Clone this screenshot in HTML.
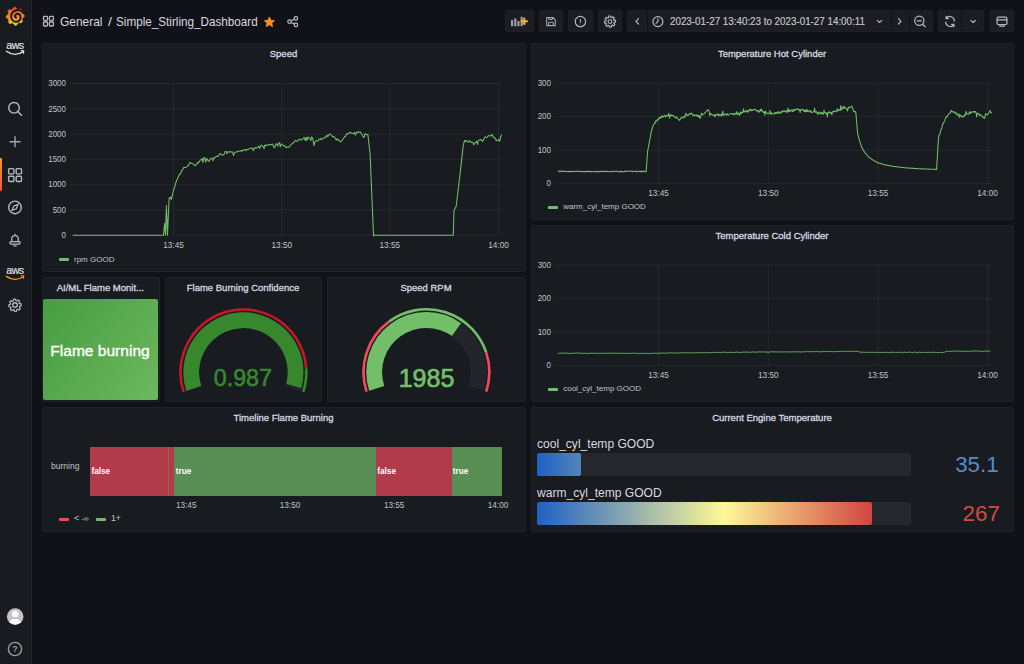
<!DOCTYPE html><html><head><meta charset="utf-8"><style>
*{margin:0;padding:0;box-sizing:border-box}
html,body{width:1024px;height:664px;overflow:hidden;background:#111217;font-family:"Liberation Sans",sans-serif}
.t{position:absolute;white-space:nowrap}
.a{position:absolute}
.panel{position:absolute;background:#181b1f;border:1px solid #1f2226;border-radius:2px}
.btn{position:absolute;background:#1b1d22;border:1px solid #1e2025;border-radius:2px}
svg{position:absolute;overflow:visible}
</style></head><body>
<div class="a" style="left:0;top:0;width:32px;height:664px;background:#181b1f;border-right:1px solid #222429"></div>
<div class="a" style="left:0;top:158.3px;width:1.6px;height:32.8px;border-radius:0 1px 1px 0;background:linear-gradient(#fa9a1c,#f05a28)"></div>
<svg style="left:0;top:0" width="32" height="32"><defs><linearGradient id="gl" x1="0" y1="0" x2="0" y2="1"><stop offset="0" stop-color="#f05028"/><stop offset="0.5" stop-color="#f4862a"/><stop offset="1" stop-color="#fcd20a"/></linearGradient></defs>
<polygon points="14.12,7.36 15.30,7.30 16.34,8.28 17.14,9.37 18.03,9.68 19.33,9.33 20.76,9.22 21.63,10.01 21.68,11.44 21.47,12.77 21.88,13.62 23.05,14.29 24.14,15.22 24.20,16.40 23.22,17.44 22.13,18.24 21.82,19.13 22.17,20.43 22.28,21.86 21.49,22.73 20.06,22.78 18.73,22.57 17.88,22.98 17.21,24.15 16.28,25.24 15.10,25.30 14.06,24.32 13.26,23.23 12.37,22.92 11.07,23.27 9.64,23.38 8.77,22.59 8.72,21.16 8.93,19.83 8.52,18.98 7.35,18.31 6.26,17.38 6.20,16.20 7.18,15.16 8.27,14.36 8.58,13.47 8.23,12.17 8.12,10.74 8.91,9.87 10.34,9.82 11.67,10.03 12.52,9.62 13.19,8.45" fill="url(#gl)" stroke="url(#gl)" stroke-width="0.8" stroke-linejoin="round"/>
<path d="M23.0 12.2 C22.50 11.90 21.15 10.72 20.0 10.4 C18.85 10.08 17.32 10.00 16.1 10.3 C14.88 10.60 13.52 11.18 12.7 12.2 C11.88 13.22 11.22 15.05 11.2 16.4 C11.18 17.75 11.83 19.40 12.6 20.3 C13.37 21.20 14.72 21.72 15.8 21.8 C16.88 21.88 18.30 21.50 19.1 20.8 C19.90 20.10 20.48 18.60 20.6 17.6 C20.72 16.60 20.30 15.43 19.8 14.8 C19.30 14.17 18.30 13.80 17.6 13.8 C16.90 13.80 16.03 14.35 15.6 14.8 C15.17 15.25 14.93 16.02 15.0 16.5 C15.07 16.98 15.83 17.50 16.0 17.7" fill="none" stroke="#181b1f" stroke-width="2.0" stroke-linecap="round"/>
</svg>
<div class="t" style="left:-285px;width:600px;text-align:center;top:39.23px;font-size:10.6px;line-height:13px;color:#e4e4e4;font-weight:normal;letter-spacing:-0.5px;-webkit-text-stroke:0.15px #e4e4e4;">aws</div>
<svg style="left:0;top:0" width="32" height="300"><path d="M6.4 51.3 Q14.7 57.2 23.2 51.6" fill="none" stroke="#e6e6e6" stroke-width="1.3" stroke-linecap="round"/><path d="M21.3 50.6 L23.7 50.8 L23.5 53.2" fill="none" stroke="#e6e6e6" stroke-width="1.1" stroke-linecap="round"/></svg>
<svg style="left:0;top:0" width="32" height="664" fill="none" stroke="#b7b7c3" stroke-width="1.4" stroke-linecap="round"><circle cx="14" cy="107.8" r="5.3"/><path d="M17.9 111.7 L21.5 115.3"/><path d="M15 136.8 V146.8 M10 141.8 H20" stroke="#a4a4b0"/><rect x="8.6" y="168.6" width="5.3" height="5.3" rx="1"/><rect x="16.2" y="168.6" width="5.3" height="5.3" rx="1"/><rect x="8.6" y="176.2" width="5.3" height="5.3" rx="1"/><rect x="16.2" y="176.2" width="5.3" height="5.3" rx="1"/><circle cx="15" cy="207.4" r="6.3"/><path d="M18 204.4 L16.3 208.7 L12 210.4 L13.7 206.1 Z" stroke-width="1.2"/><path d="M11.7 241.6 V238.9 a3.3 3.3 0 0 1 6.6 0 V241.6 M13.9 245.9 H16.1 M15 234.1 V235.4" stroke-linejoin="round" stroke-width="1.25"/><rect x="9.9" y="241.6" width="10.2" height="2.4" rx="1" stroke-width="1.25"/><circle cx="15" cy="305" r="2.3"/><circle cx="15" cy="649" r="6.6" stroke="#9a9aa6"/></svg>
<svg style="left:0;top:0" width="32" height="664"><polygon points="21.18,304.77 21.18,305.83 19.61,306.22 19.30,307.20 20.36,308.41 19.75,309.29 18.99,310.05 17.61,309.21 16.70,309.68 16.59,311.29 15.53,311.48 14.47,311.48 14.08,309.91 13.10,309.60 11.89,310.66 11.01,310.05 10.25,309.29 11.09,307.91 10.62,307.00 9.01,306.89 8.82,305.83 8.82,304.77 10.39,304.38 10.70,303.40 9.64,302.19 10.25,301.31 11.01,300.55 12.39,301.39 13.30,300.92 13.41,299.31 14.47,299.12 15.53,299.12 15.92,300.69 16.90,301.00 18.11,299.94 18.99,300.55 19.75,301.31 18.91,302.69 19.38,303.60 20.99,303.71" fill="none" stroke="#b7b7c3" stroke-width="1.2" stroke-linejoin="round"/></svg>
<div class="t" style="left:-285px;width:600px;text-align:center;top:264.33px;font-size:10.6px;line-height:13px;color:#e4e4e4;font-weight:normal;letter-spacing:-0.5px;-webkit-text-stroke:0.15px #e4e4e4;">aws</div>
<svg style="left:0;top:0" width="32" height="300"><path d="M6.4 276.40000000000003 Q14.7 282.3 23.2 276.70000000000005" fill="none" stroke="#f90" stroke-width="1.3" stroke-linecap="round"/><path d="M21.3 275.70000000000005 L23.7 275.90000000000003 L23.5 278.3" fill="none" stroke="#f90" stroke-width="1.1" stroke-linecap="round"/></svg>
<div class="t" style="left:-285px;width:600px;text-align:center;top:643.68px;font-size:9px;line-height:11px;color:#9a9aa6;font-weight:bold;letter-spacing:0px;">?</div>
<svg style="left:0;top:0" width="32" height="664"><defs><clipPath id="av"><circle cx="15.2" cy="616.5" r="8.3"/></clipPath></defs><circle cx="15.2" cy="616.5" r="8.3" fill="#c4c4c4"/><g clip-path="url(#av)"><circle cx="15.2" cy="614" r="3.3" fill="#fff"/><ellipse cx="15.2" cy="623.5" rx="6.3" ry="4.6" fill="#fff"/></g></svg>
<svg style="left:0;top:0" width="320" height="40" fill="none" stroke="#b7b7c3" stroke-width="1.3"><rect x="43.5" y="16.4" width="4" height="4" rx="0.8"/><rect x="49.4" y="16.4" width="4" height="4" rx="0.8"/><rect x="43.5" y="22.0" width="4" height="4" rx="0.8"/><rect x="49.4" y="22.0" width="4" height="4" rx="0.8"/></svg>
<div class="t" style="left:60.4px;top:13.53px;font-size:12.9px;line-height:16px;color:#d8d9e2;font-weight:normal;letter-spacing:0px;transform:scaleX(0.925);transform-origin:0 0;">General</div>
<div class="t" style="left:108.3px;top:14.33px;font-size:13.2px;line-height:16px;color:#d8d9e2;font-weight:normal;letter-spacing:0px;transform:scaleX(1.08);transform-origin:0 0;">/</div>
<div class="t" style="left:116.0px;top:13.53px;font-size:12.9px;line-height:16px;color:#d8d9e2;font-weight:normal;letter-spacing:0px;transform:scaleX(0.907);transform-origin:0 0;">Simple_Stirling_Dashboard</div>
<svg style="left:0;top:0" width="320" height="40"><polygon points="269.40,16.90 270.87,20.28 274.54,20.63 271.78,23.07 272.57,26.67 269.40,24.80 266.23,26.67 267.02,23.07 264.26,20.63 267.93,20.28" fill="#f5911f" stroke="#f5911f" stroke-width="0.8" stroke-linejoin="round"/><g fill="none" stroke="#c0c0cc" stroke-width="1.15"><circle cx="295.9" cy="18.4" r="1.75"/><circle cx="289.5" cy="21.6" r="1.75"/><circle cx="295.9" cy="24.9" r="1.75"/><path d="M291.1 20.8 L294.3 19.2 M291.1 22.4 L294.3 24.1"/></g></svg>
<div class="btn" style="left:505px;top:10px;width:29px;height:22px"></div>
<div class="btn" style="left:539px;top:10px;width:24px;height:22px"></div>
<div class="btn" style="left:568px;top:10px;width:25px;height:22px"></div>
<div class="btn" style="left:598px;top:10px;width:24px;height:22px"></div>
<div class="btn" style="left:627px;top:10px;width:306px;height:22px"></div>
<div class="btn" style="left:938px;top:10px;width:46px;height:22px"></div>
<div class="btn" style="left:990px;top:10px;width:24px;height:22px"></div>
<div class="a" style="left:647px;top:11px;width:1px;height:20px;background:#111217"></div>
<div class="a" style="left:890.5px;top:11px;width:1px;height:20px;background:#111217"></div>
<div class="a" style="left:908.5px;top:11px;width:1px;height:20px;background:#111217"></div>
<div class="a" style="left:961px;top:11px;width:1px;height:20px;background:#111217"></div>
<svg style="left:0;top:0" width="1024" height="40"><g fill="#9d9da8"><rect x="511" y="20" width="2.2" height="6.2"/><rect x="514.2" y="18.4" width="2.2" height="7.8"/><rect x="517.4" y="21" width="2.2" height="5.2"/><rect x="520.6" y="16.8" width="2.2" height="9.4"/></g><defs><linearGradient id="gp" x1="0" y1="0" x2="0" y2="1"><stop offset="0" stop-color="#f99a2c"/><stop offset="1" stop-color="#fbc431"/></linearGradient></defs><path d="M524.3 18.6 V23.9 M521.6 21.25 H527" stroke="url(#gp)" stroke-width="2.2" stroke-linecap="round"/><g fill="none" stroke="#a4a4b0" stroke-width="1.1" stroke-linejoin="round"><path d="M546.7 17.5 H553 L555.3 19.8 V25.6 H546.7 Z"/><path d="M548.7 17.5 V18.8 Q548.7 19.4 549.3 19.4 H551.9 Q552.5 19.4 552.5 18.8 V17.5 M548.7 25.6 V22.9 Q548.7 22.3 549.3 22.3 H552.7 Q553.3 22.3 553.3 22.9 V25.6"/></g><g fill="none" stroke="#b7b7c3" stroke-width="1.15"><circle cx="580.4" cy="21.6" r="5.2"/><path d="M580.4 19.2 V22.4 M580.4 23.8 V24.3"/></g><polygon points="615.58,21.12 615.58,22.08 614.12,22.42 613.84,23.30 614.84,24.41 614.29,25.20 613.60,25.89 612.33,25.09 611.52,25.52 611.44,27.01 610.48,27.18 609.52,27.18 609.18,25.72 608.30,25.44 607.19,26.44 606.40,25.89 605.71,25.20 606.51,23.93 606.08,23.12 604.59,23.04 604.42,22.08 604.42,21.12 605.88,20.78 606.16,19.90 605.16,18.79 605.71,18.00 606.40,17.31 607.67,18.11 608.48,17.68 608.56,16.19 609.52,16.02 610.48,16.02 610.82,17.48 611.70,17.76 612.81,16.76 613.60,17.31 614.29,18.00 613.49,19.27 613.92,20.08 615.41,20.16" fill="none" stroke="#b7b7c3" stroke-width="1.15" stroke-linejoin="round"/><circle cx="610" cy="21.6" r="1.9" fill="none" stroke="#b7b7c3" stroke-width="1.15"/><g fill="none" stroke="#b7b7c3" stroke-width="1.2" stroke-linecap="round" stroke-linejoin="round"><path d="M638.5 18.6 L636 21.3 L638.5 24"/><circle cx="657.9" cy="21.6" r="5"/><path d="M657.9 18.8 V21.6 L656 23.2"/><path d="M877.2 20.3 L879.5 22.5 L881.8 20.3" stroke-width="1.1"/><path d="M898.5 18.6 L901 21.3 L898.5 24"/><circle cx="919.3" cy="20.8" r="4.6"/><path d="M917.2 20.8 H921.4 M922.6 24.2 L925.3 26.8"/><path d="M954.4 21 a4.6 4.6 0 0 0 -8.3 -2.6 M945.6 22 a4.6 4.6 0 0 0 8.3 2.6 M946.1 16.3 V18.6 H948.4 M953.9 26.7 V24.4 H951.6"/><path d="M970.9 20.3 L973.2 22.5 L975.5 20.3" stroke-width="1.1"/><rect x="997.1" y="17.1" width="9.8" height="7.4" rx="1.3"/><path d="M997.1 19.9 H1006.9 M999.9 24.5 V26.2 H1004.1 V24.5"/></g></svg>
<div class="t" style="left:669.7px;top:15.47px;font-size:10.2px;line-height:13px;color:#c6c7d0;font-weight:normal;letter-spacing:0px;-webkit-text-stroke:0.15px #c6c7d0;transform:scaleX(0.962);transform-origin:0 0;">2023-01-27 13:40:23 to 2023-01-27 14:00:11</div>
<div class="panel" style="left:42px;top:43px;width:484px;height:229px"></div>
<div class="panel" style="left:531px;top:43px;width:483px;height:177px"></div>
<div class="panel" style="left:531px;top:225px;width:483px;height:177px"></div>
<div class="panel" style="left:42px;top:277px;width:118px;height:125px"></div>
<div class="panel" style="left:165px;top:277px;width:157px;height:125px"></div>
<div class="panel" style="left:327px;top:277px;width:199px;height:125px"></div>
<div class="panel" style="left:42px;top:407px;width:484px;height:125px"></div>
<div class="panel" style="left:531px;top:407px;width:483px;height:125px"></div>
<div class="t" style="left:-16.5px;width:600px;text-align:center;top:48.21px;font-size:9.5px;line-height:12px;color:#d8d9e2;font-weight:normal;letter-spacing:0px;-webkit-text-stroke:0.3px #d8d9e2;">Speed</div>
<div class="t" style="left:472px;width:600px;text-align:center;top:48.21px;font-size:9.5px;line-height:12px;color:#d8d9e2;font-weight:normal;letter-spacing:0px;-webkit-text-stroke:0.3px #d8d9e2;">Temperature Hot Cylinder</div>
<div class="t" style="left:472px;width:600px;text-align:center;top:230.21px;font-size:9.5px;line-height:12px;color:#d8d9e2;font-weight:normal;letter-spacing:0px;-webkit-text-stroke:0.3px #d8d9e2;">Temperature Cold Cylinder</div>
<div class="t" style="left:-199.7px;width:600px;text-align:center;top:282.21px;font-size:9.5px;line-height:12px;color:#d8d9e2;font-weight:normal;letter-spacing:0px;-webkit-text-stroke:0.3px #d8d9e2;">AI/ML Flame Monit...</div>
<div class="t" style="left:-57px;width:600px;text-align:center;top:282.21px;font-size:9.5px;line-height:12px;color:#d8d9e2;font-weight:normal;letter-spacing:0px;-webkit-text-stroke:0.3px #d8d9e2;">Flame Burning Confidence</div>
<div class="t" style="left:126px;width:600px;text-align:center;top:282.21px;font-size:9.5px;line-height:12px;color:#d8d9e2;font-weight:normal;letter-spacing:0px;-webkit-text-stroke:0.3px #d8d9e2;">Speed RPM</div>
<div class="t" style="left:-16.5px;width:600px;text-align:center;top:412.21px;font-size:9.5px;line-height:12px;color:#d8d9e2;font-weight:normal;letter-spacing:0px;-webkit-text-stroke:0.3px #d8d9e2;">Timeline Flame Burning</div>
<div class="t" style="left:472px;width:600px;text-align:center;top:412.21px;font-size:9.5px;line-height:12px;color:#d8d9e2;font-weight:normal;letter-spacing:0px;-webkit-text-stroke:0.3px #d8d9e2;">Current Engine Temperature</div>
<svg style="left:0;top:0" width="1024" height="664"><line x1="70" y1="83.5" x2="502.5" y2="83.5" stroke="#26282c" stroke-width="1"/><line x1="70" y1="108.8" x2="502.5" y2="108.8" stroke="#26282c" stroke-width="1"/><line x1="70" y1="134.1" x2="502.5" y2="134.1" stroke="#26282c" stroke-width="1"/><line x1="70" y1="159.4" x2="502.5" y2="159.4" stroke="#26282c" stroke-width="1"/><line x1="70" y1="184.7" x2="502.5" y2="184.7" stroke="#26282c" stroke-width="1"/><line x1="70" y1="210.0" x2="502.5" y2="210.0" stroke="#26282c" stroke-width="1"/><line x1="70" y1="235.3" x2="502.5" y2="235.3" stroke="#26282c" stroke-width="1"/><line x1="173.5" y1="83.5" x2="173.5" y2="235.3" stroke="#26282c" stroke-width="1"/><line x1="281.8" y1="83.5" x2="281.8" y2="235.3" stroke="#26282c" stroke-width="1"/><line x1="389.8" y1="83.5" x2="389.8" y2="235.3" stroke="#26282c" stroke-width="1"/><line x1="498.5" y1="83.5" x2="498.5" y2="235.3" stroke="#26282c" stroke-width="1"/></svg>
<div class="t" style="left:-533.7px;width:600px;text-align:right;top:78.27px;font-size:8.6px;line-height:11px;color:#c2c3cc;font-weight:normal;letter-spacing:0px;transform:scaleX(0.93);transform-origin:100% 0;">3000</div>
<div class="t" style="left:-533.7px;width:600px;text-align:right;top:103.57px;font-size:8.6px;line-height:11px;color:#c2c3cc;font-weight:normal;letter-spacing:0px;transform:scaleX(0.93);transform-origin:100% 0;">2500</div>
<div class="t" style="left:-533.7px;width:600px;text-align:right;top:128.87px;font-size:8.6px;line-height:11px;color:#c2c3cc;font-weight:normal;letter-spacing:0px;transform:scaleX(0.93);transform-origin:100% 0;">2000</div>
<div class="t" style="left:-533.7px;width:600px;text-align:right;top:154.17px;font-size:8.6px;line-height:11px;color:#c2c3cc;font-weight:normal;letter-spacing:0px;transform:scaleX(0.93);transform-origin:100% 0;">1500</div>
<div class="t" style="left:-533.7px;width:600px;text-align:right;top:179.47px;font-size:8.6px;line-height:11px;color:#c2c3cc;font-weight:normal;letter-spacing:0px;transform:scaleX(0.93);transform-origin:100% 0;">1000</div>
<div class="t" style="left:-533.7px;width:600px;text-align:right;top:204.77px;font-size:8.6px;line-height:11px;color:#c2c3cc;font-weight:normal;letter-spacing:0px;transform:scaleX(0.93);transform-origin:100% 0;">500</div>
<div class="t" style="left:-533.7px;width:600px;text-align:right;top:230.07px;font-size:8.6px;line-height:11px;color:#c2c3cc;font-weight:normal;letter-spacing:0px;transform:scaleX(0.93);transform-origin:100% 0;">0</div>
<div class="t" style="left:-126.5px;width:600px;text-align:center;top:240.96px;font-size:8.2px;line-height:10px;color:#c2c3cc;font-weight:normal;letter-spacing:0px;">13:45</div>
<div class="t" style="left:-18.19999999999999px;width:600px;text-align:center;top:240.96px;font-size:8.2px;line-height:10px;color:#c2c3cc;font-weight:normal;letter-spacing:0px;">13:50</div>
<div class="t" style="left:89.80000000000001px;width:600px;text-align:center;top:240.96px;font-size:8.2px;line-height:10px;color:#c2c3cc;font-weight:normal;letter-spacing:0px;">13:55</div>
<div class="t" style="left:198.5px;width:600px;text-align:center;top:240.96px;font-size:8.2px;line-height:10px;color:#c2c3cc;font-weight:normal;letter-spacing:0px;">14:00</div>
<svg style="left:0;top:0" width="1024" height="664"><polyline points="72.80,235.20 73.71,235.20 74.61,235.20 75.52,235.20 76.43,235.20 77.33,235.20 78.24,235.20 79.15,235.20 80.06,235.20 80.96,235.20 81.87,235.20 82.78,235.20 83.68,235.20 84.59,235.20 85.50,235.20 86.41,235.20 87.31,235.20 88.22,235.20 89.13,235.20 90.03,235.20 90.94,235.20 91.85,235.20 92.75,235.20 93.66,235.20 94.57,235.20 95.47,235.20 96.38,235.20 97.29,235.20 98.20,235.20 99.10,235.20 100.01,235.20 100.92,235.20 101.82,235.20 102.73,235.20 103.64,235.20 104.54,235.20 105.45,235.20 106.36,235.20 107.27,235.20 108.17,235.20 109.08,235.20 109.99,235.20 110.89,235.20 111.80,235.20 112.71,235.20 113.62,235.20 114.52,235.20 115.43,235.20 116.34,235.20 117.24,235.20 118.15,235.20 119.06,235.20 119.96,235.20 120.87,235.20 121.78,235.20 122.69,235.20 123.59,235.20 124.50,235.20 125.41,235.20 126.31,235.20 127.22,235.20 128.13,235.20 129.03,235.20 129.94,235.20 130.85,235.20 131.75,235.20 132.66,235.20 133.57,235.20 134.48,235.20 135.38,235.20 136.29,235.20 137.20,235.20 138.10,235.20 139.01,235.20 139.92,235.20 140.82,235.20 141.73,235.20 142.64,235.20 143.55,235.20 144.45,235.20 145.36,235.20 146.27,235.20 147.17,235.20 148.08,235.20 148.99,235.20 149.89,235.20 150.80,235.20 151.71,235.20 152.62,235.20 153.52,235.20 154.43,235.20 155.34,235.20 156.24,235.20 157.15,235.20 158.06,235.20 158.96,235.20 159.87,235.20 160.78,235.20 161.69,235.20 162.59,235.20 163.50,235.20 164.60,223.30 165.50,235.20 166.40,205.40 167.50,235.20 169.10,198.08 170.70,197.24 171.30,199.70 172.43,194.83 173.57,189.97 174.70,186.88 175.60,183.75 176.50,180.53 177.40,178.98 178.30,176.97 179.20,174.30 180.10,174.40 181.00,172.80 181.90,170.11 182.80,169.82 183.70,167.36 184.66,167.50 185.61,167.57 186.57,166.91 187.53,165.93 188.49,165.46 189.44,163.04 190.40,162.53 191.30,163.33 192.20,163.42 193.10,163.95 194.00,164.71 194.90,165.71 195.80,165.04 196.70,164.44 197.60,162.07 198.50,162.95 199.40,161.44 200.30,160.00 201.20,160.01 202.10,158.27 203.00,162.50 203.90,157.52 204.80,157.83 205.70,162.25 206.60,158.41 207.50,159.52 208.40,161.36 209.30,160.95 210.20,158.65 211.10,158.11 212.00,158.42 212.90,160.70 213.80,157.33 214.70,158.04 215.60,156.72 216.50,156.64 217.40,156.02 218.36,156.14 219.31,154.48 220.27,153.45 221.23,154.28 222.19,155.11 223.14,154.93 224.10,154.42 225.04,151.43 225.98,151.31 226.93,153.80 227.87,152.15 228.81,151.40 229.75,152.19 230.69,151.83 231.63,151.94 232.57,151.90 233.52,155.58 234.46,152.97 235.40,152.05 236.36,151.83 237.31,151.98 238.27,151.08 239.23,151.30 240.19,151.26 241.14,150.48 242.10,151.20 243.06,150.56 244.01,149.66 244.97,149.55 245.93,150.61 246.89,149.24 247.84,149.73 248.80,148.89 249.70,148.56 250.60,148.29 251.50,148.35 252.40,148.11 253.30,150.77 254.20,148.60 255.10,147.48 256.00,148.24 256.90,147.65 257.80,147.26 258.70,146.28 259.60,148.61 260.50,145.83 261.40,145.12 262.30,146.19 263.20,146.48 264.10,148.72 265.00,144.81 265.90,145.69 266.80,145.08 267.70,145.36 268.60,144.53 269.50,144.87 270.40,144.51 271.30,144.77 272.20,143.93 273.10,145.32 274.00,147.77 274.90,147.03 275.80,143.69 276.70,143.89 277.60,146.09 278.50,143.07 279.40,142.85 280.30,146.81 281.26,143.86 282.21,144.56 283.17,145.66 284.13,145.50 285.09,145.99 286.04,147.80 287.00,147.16 287.90,147.02 288.80,147.11 289.70,146.41 290.60,144.94 291.50,144.34 292.40,143.46 293.30,142.81 294.20,142.23 295.10,140.57 296.00,140.55 296.92,141.34 297.85,141.04 298.77,139.54 299.69,139.03 300.62,139.88 301.54,139.91 302.46,139.56 303.39,138.07 304.31,137.65 305.24,140.64 306.16,137.38 307.08,140.49 308.01,136.96 308.93,137.84 309.85,138.16 310.78,140.66 311.70,136.82 312.85,138.86 314.00,145.52 314.92,142.16 315.85,141.05 316.77,140.61 317.69,141.15 318.62,139.91 319.54,139.41 320.46,138.41 321.39,139.73 322.31,138.81 323.24,138.23 324.16,137.74 325.08,136.89 326.01,137.25 326.93,135.19 327.85,136.36 328.78,134.95 329.70,133.97 330.63,134.56 331.57,135.35 332.50,136.66 333.43,136.43 334.37,137.22 335.30,138.12 336.23,140.40 337.17,138.83 338.10,139.35 339.03,140.73 339.97,141.72 340.90,141.50 341.87,140.78 342.84,139.04 343.81,138.18 344.79,136.36 345.76,136.29 346.73,133.64 347.70,133.44 348.66,133.87 349.61,132.40 350.57,132.39 351.53,133.24 352.49,133.59 353.44,133.47 354.40,132.55 355.36,135.00 356.31,132.20 357.27,132.73 358.23,131.54 359.19,132.36 360.14,131.86 361.10,133.31 362.07,134.85 363.04,136.63 364.01,137.54 364.99,133.41 365.96,134.49 366.93,134.64 367.90,134.60 369.00,144.15 370.10,153.70 371.23,180.87 372.37,208.03 373.50,235.81 374.41,235.20 375.31,235.20 376.22,235.20 377.13,235.20 378.03,235.20 378.94,235.20 379.85,235.20 380.75,235.20 381.66,235.20 382.57,235.20 383.48,235.20 384.38,235.20 385.29,235.20 386.20,235.20 387.10,235.20 388.01,235.20 388.92,235.20 389.82,235.20 390.73,235.20 391.64,235.20 392.54,235.20 393.45,235.20 394.36,235.20 395.26,235.20 396.17,235.20 397.08,235.20 397.98,235.20 398.89,235.20 399.80,235.20 400.70,235.20 401.61,235.20 402.52,235.20 403.43,235.20 404.33,235.20 405.24,235.20 406.15,235.20 407.05,235.20 407.96,235.20 408.87,235.20 409.77,235.20 410.68,235.20 411.59,235.20 412.49,235.20 413.40,235.20 414.31,235.20 415.21,235.20 416.12,235.20 417.03,235.20 417.93,235.20 418.84,235.20 419.75,235.20 420.65,235.20 421.56,235.20 422.47,235.20 423.38,235.20 424.28,235.20 425.19,235.20 426.10,235.20 427.00,235.20 427.91,235.20 428.82,235.20 429.72,235.20 430.63,235.20 431.54,235.20 432.44,235.20 433.35,235.20 434.26,235.20 435.16,235.20 436.07,235.20 436.98,235.20 437.88,235.20 438.79,235.20 439.70,235.20 440.60,235.20 441.51,235.20 442.42,235.20 443.33,235.20 444.23,235.20 445.14,235.20 446.05,235.20 446.95,235.20 447.86,235.20 448.77,235.20 449.67,235.20 450.58,235.20 451.49,235.20 452.39,235.20 453.30,235.20 454.00,210.31 455.10,208.40 456.20,206.30 457.25,197.45 458.30,188.60 459.35,179.75 460.40,170.90 461.33,162.63 462.27,154.37 463.20,145.33 464.60,140.50 465.51,141.32 466.42,140.49 467.33,141.55 468.24,142.23 469.15,140.86 470.05,141.06 470.96,142.39 471.87,142.22 472.78,142.19 473.69,144.72 474.60,143.11 475.56,142.60 476.53,141.17 477.49,144.41 478.45,140.17 479.42,139.90 480.38,139.52 481.35,139.77 482.31,141.48 483.27,140.52 484.24,138.24 485.20,136.68 486.20,137.53 487.20,137.28 488.20,135.82 489.20,135.66 490.20,136.15 491.20,135.26 492.20,134.56 493.26,137.34 494.32,137.39 495.38,138.85 496.44,140.69 497.50,140.40 498.57,139.27 499.65,141.29 500.73,136.62 501.80,134.80" fill="none" stroke="#73bf69" stroke-width="1.05" stroke-linejoin="round"/></svg>
<div class="a" style="left:58.8px;top:258.0px;width:10px;height:3px;border-radius:1px;background:#73bf69"></div>
<div class="t" style="left:74.0px;top:254.63px;font-size:8px;line-height:10px;color:#c2c3cc;font-weight:normal;letter-spacing:0px;">rpm GOOD</div>
<svg style="left:0;top:0" width="1024" height="664"><line x1="555" y1="83.2" x2="992" y2="83.2" stroke="#26282c" stroke-width="1"/><line x1="555" y1="116.7" x2="992" y2="116.7" stroke="#26282c" stroke-width="1"/><line x1="555" y1="150.2" x2="992" y2="150.2" stroke="#26282c" stroke-width="1"/><line x1="555" y1="183.7" x2="992" y2="183.7" stroke="#26282c" stroke-width="1"/><line x1="658.5" y1="83.2" x2="658.5" y2="183.7" stroke="#26282c" stroke-width="1"/><line x1="768.3" y1="83.2" x2="768.3" y2="183.7" stroke="#26282c" stroke-width="1"/><line x1="878" y1="83.2" x2="878" y2="183.7" stroke="#26282c" stroke-width="1"/><line x1="987.5" y1="83.2" x2="987.5" y2="183.7" stroke="#26282c" stroke-width="1"/></svg>
<div class="t" style="left:-49.200000000000045px;width:600px;text-align:right;top:77.97px;font-size:8.6px;line-height:11px;color:#c2c3cc;font-weight:normal;letter-spacing:0px;transform:scaleX(0.93);transform-origin:100% 0;">300</div>
<div class="t" style="left:-49.200000000000045px;width:600px;text-align:right;top:111.47px;font-size:8.6px;line-height:11px;color:#c2c3cc;font-weight:normal;letter-spacing:0px;transform:scaleX(0.93);transform-origin:100% 0;">200</div>
<div class="t" style="left:-49.200000000000045px;width:600px;text-align:right;top:144.97px;font-size:8.6px;line-height:11px;color:#c2c3cc;font-weight:normal;letter-spacing:0px;transform:scaleX(0.93);transform-origin:100% 0;">100</div>
<div class="t" style="left:-49.200000000000045px;width:600px;text-align:right;top:178.47px;font-size:8.6px;line-height:11px;color:#c2c3cc;font-weight:normal;letter-spacing:0px;transform:scaleX(0.93);transform-origin:100% 0;">0</div>
<div class="t" style="left:358.5px;width:600px;text-align:center;top:188.86px;font-size:8.2px;line-height:10px;color:#c2c3cc;font-weight:normal;letter-spacing:0px;">13:45</div>
<div class="t" style="left:468.29999999999995px;width:600px;text-align:center;top:188.86px;font-size:8.2px;line-height:10px;color:#c2c3cc;font-weight:normal;letter-spacing:0px;">13:50</div>
<div class="t" style="left:578px;width:600px;text-align:center;top:188.86px;font-size:8.2px;line-height:10px;color:#c2c3cc;font-weight:normal;letter-spacing:0px;">13:55</div>
<div class="t" style="left:687.5px;width:600px;text-align:center;top:188.86px;font-size:8.2px;line-height:10px;color:#c2c3cc;font-weight:normal;letter-spacing:0px;">14:00</div>
<svg style="left:0;top:0" width="1024" height="664"><polyline points="558.00,171.34 558.55,171.19 559.10,171.64 559.65,171.12 560.21,171.53 560.76,171.38 561.31,171.10 561.86,171.51 562.41,171.08 562.96,171.44 563.51,171.11 564.06,171.13 564.62,171.43 565.17,171.79 565.72,171.16 566.27,171.25 566.82,171.61 567.37,171.90 567.92,171.57 568.47,171.41 569.02,171.93 569.58,171.09 570.13,171.82 570.68,171.31 571.23,171.18 571.78,171.16 572.33,171.33 572.88,171.78 573.44,171.21 573.99,171.57 574.54,171.63 575.09,171.39 575.64,171.54 576.19,171.11 576.74,171.10 577.29,171.24 577.85,171.66 578.40,171.43 578.95,171.33 579.50,171.58 580.05,171.46 580.60,171.32 581.15,171.76 581.70,171.68 582.25,171.27 582.81,171.57 583.36,171.52 583.91,171.84 584.46,171.71 585.01,171.31 585.56,171.93 586.11,171.16 586.66,171.43 587.22,171.73 587.77,171.19 588.32,171.49 588.87,171.09 589.42,171.65 589.97,171.74 590.52,171.57 591.08,171.84 591.63,171.33 592.18,171.68 592.73,171.58 593.28,171.57 593.83,171.46 594.38,171.81 594.93,171.90 595.49,171.48 596.04,171.65 596.59,171.10 597.14,171.68 597.69,171.63 598.24,171.94 598.79,171.79 599.34,171.31 599.89,171.40 600.45,171.65 601.00,171.07 601.55,171.47 602.10,171.20 602.65,171.16 603.20,171.10 603.75,171.74 604.31,171.17 604.86,171.27 605.41,171.40 605.96,171.83 606.51,171.12 607.06,171.45 607.61,171.54 608.16,171.85 608.72,171.79 609.27,171.83 609.82,171.30 610.37,171.42 610.92,171.37 611.47,171.85 612.02,171.91 612.57,171.19 613.12,171.21 613.68,171.26 614.23,171.26 614.78,171.49 615.33,171.58 615.88,171.29 616.43,171.05 616.98,171.43 617.54,171.38 618.09,171.56 618.64,171.91 619.19,171.67 619.74,171.51 620.29,171.61 620.84,171.66 621.39,171.10 621.95,171.86 622.50,171.75 623.05,171.84 623.60,171.77 624.15,171.40 624.70,171.41 625.25,171.14 625.80,171.62 626.36,171.11 626.91,171.11 627.46,171.24 628.01,171.20 628.56,171.36 629.11,171.10 629.66,171.05 630.21,171.19 630.76,171.14 631.32,171.38 631.87,171.07 632.42,171.84 632.97,171.60 633.52,171.18 634.07,171.28 634.62,171.36 635.18,171.38 635.73,171.16 636.28,171.81 636.83,171.94 637.38,171.47 637.93,171.49 638.48,171.13 639.03,171.14 639.59,171.36 640.14,171.29 640.69,171.80 641.24,171.20 641.79,171.07 642.34,171.91 642.89,171.53 643.44,171.18 644.00,171.54 644.55,171.07 645.10,171.53 645.65,171.93 646.20,171.50 646.90,161.50 647.60,151.50 648.20,148.31 648.80,145.13 649.40,141.94 650.00,138.76 650.60,135.57 651.20,132.39 651.80,129.93 652.36,127.53 652.92,126.47 653.48,124.45 654.04,124.31 654.60,122.68 655.18,123.00 655.77,120.79 656.35,120.69 656.93,121.24 657.52,119.32 658.10,119.65 658.68,118.89 659.27,117.64 659.85,118.56 660.43,116.89 661.02,117.67 661.60,116.40 662.15,115.87 662.71,117.27 663.26,117.04 663.82,116.02 664.38,115.28 664.93,116.23 665.49,116.85 666.04,115.54 666.60,116.14 667.15,115.16 667.71,115.75 668.26,115.60 668.82,113.24 669.37,118.08 669.93,115.50 670.48,115.13 671.04,115.98 671.59,114.84 672.15,115.29 672.70,116.02 673.28,115.56 673.87,115.80 674.45,117.13 675.03,117.48 675.62,117.84 676.20,116.54 676.78,117.13 677.37,118.57 677.95,118.78 678.53,119.47 679.12,119.96 679.70,120.38 680.27,118.94 680.84,118.14 681.41,117.47 681.98,117.14 682.55,117.81 683.12,118.04 683.69,116.67 684.26,116.35 684.84,117.31 685.41,115.46 685.98,113.16 686.55,115.37 687.12,115.46 687.69,115.58 688.26,114.45 688.83,115.08 689.40,113.95 689.96,113.36 690.52,113.79 691.08,113.88 691.64,112.95 692.20,114.68 692.76,115.58 693.32,114.71 693.88,114.77 694.44,116.08 695.00,115.66 695.56,115.08 696.12,114.66 696.68,114.98 697.24,116.53 697.80,115.41 698.36,115.38 698.92,117.12 699.48,115.82 700.04,118.44 700.60,116.61 701.18,115.03 701.75,113.05 702.33,114.34 702.90,114.80 703.48,114.48 704.05,114.12 704.62,112.86 705.20,112.78 705.77,112.05 706.35,110.86 706.92,110.93 707.50,110.07 708.10,109.55 708.70,110.48 709.30,112.31 709.90,115.92 710.50,113.63 711.10,113.55 711.70,114.35 712.26,114.58 712.82,115.13 713.37,115.48 713.93,115.37 714.49,114.56 715.05,116.78 715.60,115.34 716.16,114.55 716.72,114.87 717.28,114.31 717.84,113.92 718.39,115.79 718.95,114.24 719.51,114.96 720.07,115.67 720.62,114.76 721.18,114.17 721.74,116.21 722.30,114.26 722.86,111.03 723.41,115.27 723.97,114.99 724.53,114.28 725.09,114.69 725.64,114.03 726.20,115.12 726.76,113.92 727.32,113.77 727.88,115.13 728.43,115.16 728.99,114.74 729.55,114.18 730.11,113.82 730.66,113.47 731.22,113.78 731.78,113.68 732.34,114.25 732.90,113.43 733.45,114.07 734.01,115.04 734.57,113.40 735.13,113.17 735.68,114.10 736.24,113.75 736.80,111.52 737.36,114.70 737.91,113.88 738.47,113.02 739.03,113.23 739.58,115.51 740.14,113.85 740.70,111.92 741.25,113.43 741.81,112.14 742.37,112.54 742.92,112.80 743.48,108.84 744.04,111.55 744.59,111.55 745.15,112.07 745.71,110.80 746.26,111.30 746.82,110.40 747.38,112.16 747.93,111.05 748.49,111.88 749.05,109.86 749.60,110.52 750.16,109.11 750.72,110.24 751.27,110.85 751.83,109.53 752.39,110.62 752.94,110.36 753.50,109.69 754.07,109.68 754.64,109.28 755.21,109.43 755.78,110.05 756.34,110.87 756.91,110.21 757.48,111.18 758.05,110.59 758.62,112.37 759.19,112.02 759.76,110.67 760.33,109.45 760.90,111.28 761.47,108.96 762.03,110.86 762.60,111.09 763.17,112.60 763.74,111.79 764.31,111.91 764.88,115.09 765.45,110.90 766.02,112.76 766.59,112.72 767.16,113.08 767.72,113.84 768.29,113.92 768.86,113.16 769.43,112.82 770.00,110.52 770.56,113.37 771.12,114.61 771.67,112.74 772.23,113.36 772.79,113.62 773.35,113.99 773.91,113.89 774.46,112.87 775.02,112.54 775.58,113.73 776.14,112.67 776.70,112.25 777.25,113.69 777.81,113.26 778.37,111.62 778.93,111.84 779.49,113.23 780.04,112.19 780.60,113.10 781.16,112.36 781.72,111.32 782.28,112.15 782.83,110.89 783.39,111.15 783.95,110.56 784.51,111.41 785.07,110.71 785.62,111.27 786.18,112.27 786.74,110.99 787.30,112.19 787.86,107.99 788.41,110.88 788.97,111.71 789.53,109.89 790.09,111.60 790.65,110.43 791.20,110.17 791.76,109.74 792.32,111.37 792.88,111.24 793.44,109.38 793.99,111.00 794.55,109.42 795.11,109.83 795.67,109.30 796.23,109.89 796.78,109.26 797.34,108.77 797.90,108.68 798.46,109.88 799.01,109.38 799.57,109.70 800.12,112.55 800.68,109.49 801.24,110.02 801.79,109.40 802.35,109.46 802.90,109.44 803.46,110.91 804.02,109.63 804.57,111.51 805.13,111.68 805.68,110.16 806.24,111.77 806.80,109.21 807.35,111.54 807.91,110.66 808.46,111.20 809.02,110.81 809.58,110.44 810.13,112.32 810.69,110.87 811.24,111.68 811.80,112.45 812.36,112.55 812.91,112.13 813.47,111.48 814.02,111.76 814.58,108.09 815.14,111.71 815.69,112.46 816.25,111.38 816.80,112.69 817.36,113.33 817.92,114.44 818.47,111.92 819.03,112.96 819.58,113.12 820.14,113.83 820.70,112.24 821.25,113.69 821.81,112.23 822.36,113.00 822.92,114.25 823.48,114.27 824.03,110.07 824.59,112.66 825.14,113.00 825.70,113.81 826.26,112.99 826.81,112.58 827.37,116.94 827.93,113.09 828.49,112.45 829.04,111.92 829.60,113.07 830.16,112.05 830.71,112.94 831.27,112.48 831.83,114.82 832.39,112.37 832.94,111.37 833.50,111.04 834.06,111.79 834.61,111.18 835.17,111.80 835.73,111.06 836.29,111.01 836.84,111.60 837.40,108.53 837.96,110.67 838.51,110.59 839.07,109.69 839.63,110.58 840.19,110.47 840.74,105.44 841.30,109.94 841.86,109.42 842.41,108.20 842.97,106.39 843.53,108.25 844.09,108.16 844.64,106.61 845.20,108.07 845.78,108.45 846.37,108.61 846.95,108.97 847.53,111.00 848.12,108.00 848.70,106.94 849.28,107.98 849.87,107.33 850.45,107.05 851.03,107.01 851.62,106.17 852.20,107.08 853.10,109.45 853.77,111.53 854.45,111.82 855.12,111.44 855.80,111.70 856.30,118.00 856.95,125.70 857.60,133.40 858.23,135.83 858.87,138.27 859.50,140.70 860.25,142.95 861.00,145.20 861.67,146.70 862.33,148.20 863.00,149.70 863.62,150.62 864.25,151.55 864.88,152.47 865.50,153.40 866.10,154.10 866.70,154.80 867.30,155.50 867.90,156.20 868.50,156.90 869.06,157.29 869.62,157.68 870.19,158.06 870.75,158.45 871.31,158.84 871.88,159.22 872.44,159.61 873.00,160.00 873.57,160.34 874.14,160.69 874.71,161.03 875.29,161.37 875.86,161.71 876.43,162.06 877.00,162.40 877.58,162.58 878.17,162.77 878.75,162.95 879.33,163.13 879.92,163.32 880.50,163.50 881.08,163.68 881.67,163.87 882.25,164.05 882.83,164.23 883.42,164.42 884.00,164.60 884.56,164.71 885.12,164.82 885.69,164.94 886.25,165.05 886.81,165.16 887.38,165.28 887.94,165.39 888.50,165.50 889.06,165.61 889.62,165.72 890.19,165.84 890.75,165.95 891.31,166.06 891.88,166.18 892.44,166.29 893.00,166.40 893.57,166.47 894.14,166.53 894.71,166.60 895.29,166.67 895.86,166.73 896.43,166.80 897.00,166.87 897.57,166.93 898.14,167.00 898.71,167.07 899.29,167.13 899.86,167.20 900.43,167.27 901.00,167.33 901.57,167.40 902.14,167.47 902.71,167.53 903.29,167.60 903.86,167.67 904.43,167.73 905.00,167.80 905.56,167.84 906.11,167.87 906.67,167.91 907.22,167.95 907.78,167.99 908.33,168.02 908.89,168.06 909.44,168.10 910.00,168.13 910.56,168.17 911.11,168.21 911.67,168.24 912.22,168.28 912.78,168.32 913.33,168.36 913.89,168.39 914.44,168.43 915.00,168.47 915.56,168.50 916.11,168.54 916.67,168.58 917.22,168.61 917.78,168.65 918.33,168.69 918.89,168.73 919.44,168.76 920.00,168.80 920.55,168.82 921.11,168.84 921.66,168.86 922.21,168.88 922.77,168.90 923.32,168.92 923.87,168.94 924.43,168.96 924.98,168.98 925.53,169.00 926.09,169.02 926.64,169.04 927.19,169.06 927.75,169.08 928.30,169.10 928.85,169.12 929.41,169.14 929.96,169.16 930.51,169.18 931.07,169.20 931.62,169.22 932.17,169.24 932.73,169.26 933.28,169.28 933.83,169.30 934.39,169.32 934.94,169.34 935.49,169.36 936.05,169.38 936.60,169.40 937.23,158.77 937.87,148.13 938.50,137.79 939.06,135.14 939.62,134.64 940.18,133.04 940.74,130.74 941.30,128.53 941.86,128.17 942.42,125.31 942.98,123.46 943.54,123.42 944.10,121.72 944.68,120.95 945.25,119.04 945.83,117.56 946.40,116.60 946.98,117.10 947.55,115.83 948.12,114.89 948.70,114.13 949.27,113.29 949.85,113.39 950.42,112.52 951.00,110.91 951.56,110.48 952.12,111.99 952.68,111.69 953.24,111.94 953.80,111.77 954.36,112.46 954.92,112.04 955.48,113.80 956.04,112.72 956.60,114.23 957.16,114.74 957.72,115.26 958.28,114.42 958.84,113.76 959.40,117.34 959.96,115.88 960.52,115.21 961.08,116.09 961.64,116.10 962.20,117.15 962.75,116.26 963.31,116.97 963.87,116.40 964.42,115.07 964.98,115.87 965.53,114.45 966.09,111.33 966.64,113.92 967.20,114.04 967.75,114.12 968.30,114.23 968.86,114.05 969.41,112.10 969.97,113.58 970.52,111.60 971.08,112.67 971.63,112.65 972.19,112.34 972.75,111.62 973.30,111.68 973.86,111.41 974.42,112.47 974.98,111.52 975.54,111.52 976.10,112.73 976.66,117.01 977.22,113.58 977.78,113.55 978.34,113.30 978.90,113.56 979.46,115.71 980.02,115.22 980.58,114.62 981.14,115.58 981.70,116.20 982.26,116.02 982.82,117.06 983.38,117.96 983.94,117.19 984.50,118.31 985.05,116.93 985.60,113.71 986.15,114.48 986.70,114.21 987.25,114.72 987.80,114.62 988.35,113.35 988.90,112.76 989.45,111.62 990.00,110.36 990.67,112.49 991.33,112.98 992.00,113.00" fill="none" stroke="#73bf69" stroke-width="1.05" stroke-linejoin="round"/></svg>
<div class="a" style="left:548px;top:205.8px;width:10px;height:3px;border-radius:1px;background:#73bf69"></div>
<div class="t" style="left:563.2px;top:202.43px;font-size:8px;line-height:10px;color:#c2c3cc;font-weight:normal;letter-spacing:0px;">warm_cyl_temp GOOD</div>
<svg style="left:0;top:0" width="1024" height="664"><line x1="555" y1="264.9" x2="992" y2="264.9" stroke="#26282c" stroke-width="1"/><line x1="555" y1="298.34999999999997" x2="992" y2="298.34999999999997" stroke="#26282c" stroke-width="1"/><line x1="555" y1="331.79999999999995" x2="992" y2="331.79999999999995" stroke="#26282c" stroke-width="1"/><line x1="555" y1="365.25" x2="992" y2="365.25" stroke="#26282c" stroke-width="1"/><line x1="658.5" y1="264.9" x2="658.5" y2="365.25" stroke="#26282c" stroke-width="1"/><line x1="768.3" y1="264.9" x2="768.3" y2="365.25" stroke="#26282c" stroke-width="1"/><line x1="878" y1="264.9" x2="878" y2="365.25" stroke="#26282c" stroke-width="1"/><line x1="987.5" y1="264.9" x2="987.5" y2="365.25" stroke="#26282c" stroke-width="1"/></svg>
<div class="t" style="left:-49.200000000000045px;width:600px;text-align:right;top:259.67px;font-size:8.6px;line-height:11px;color:#c2c3cc;font-weight:normal;letter-spacing:0px;transform:scaleX(0.93);transform-origin:100% 0;">300</div>
<div class="t" style="left:-49.200000000000045px;width:600px;text-align:right;top:293.12px;font-size:8.6px;line-height:11px;color:#c2c3cc;font-weight:normal;letter-spacing:0px;transform:scaleX(0.93);transform-origin:100% 0;">200</div>
<div class="t" style="left:-49.200000000000045px;width:600px;text-align:right;top:326.57px;font-size:8.6px;line-height:11px;color:#c2c3cc;font-weight:normal;letter-spacing:0px;transform:scaleX(0.93);transform-origin:100% 0;">100</div>
<div class="t" style="left:-49.200000000000045px;width:600px;text-align:right;top:360.02px;font-size:8.6px;line-height:11px;color:#c2c3cc;font-weight:normal;letter-spacing:0px;transform:scaleX(0.93);transform-origin:100% 0;">0</div>
<div class="t" style="left:358.5px;width:600px;text-align:center;top:370.86px;font-size:8.2px;line-height:10px;color:#c2c3cc;font-weight:normal;letter-spacing:0px;">13:45</div>
<div class="t" style="left:468.29999999999995px;width:600px;text-align:center;top:370.86px;font-size:8.2px;line-height:10px;color:#c2c3cc;font-weight:normal;letter-spacing:0px;">13:50</div>
<div class="t" style="left:578px;width:600px;text-align:center;top:370.86px;font-size:8.2px;line-height:10px;color:#c2c3cc;font-weight:normal;letter-spacing:0px;">13:55</div>
<div class="t" style="left:687.5px;width:600px;text-align:center;top:370.86px;font-size:8.2px;line-height:10px;color:#c2c3cc;font-weight:normal;letter-spacing:0px;">14:00</div>
<svg style="left:0;top:0" width="1024" height="664"><polyline points="558.00,353.17 558.80,353.24 559.60,353.46 560.40,353.18 561.20,353.21 562.00,353.26 562.80,353.02 563.60,353.22 564.40,353.29 565.20,353.39 566.00,352.97 566.80,353.10 567.60,352.98 568.40,353.41 569.20,353.34 570.00,352.95 570.80,353.52 571.60,353.51 572.40,353.32 573.20,353.30 574.00,353.03 574.80,352.95 575.60,353.26 576.40,352.98 577.20,353.06 578.00,353.09 578.80,352.96 579.60,353.23 580.40,353.21 581.20,353.46 582.00,353.27 582.80,353.34 583.60,353.26 584.40,353.36 585.20,353.24 586.00,353.13 586.80,353.56 587.60,353.56 588.40,353.47 589.20,353.39 590.00,353.16 590.80,353.11 591.60,353.15 592.40,353.02 593.20,353.44 594.00,353.22 594.80,353.49 595.60,353.22 596.40,353.56 597.20,353.50 598.00,352.99 598.80,353.12 599.60,353.54 600.40,353.28 601.20,353.58 602.00,353.24 602.80,353.04 603.60,353.38 604.40,353.47 605.20,353.17 606.00,353.06 606.80,353.21 607.60,353.59 608.40,353.47 609.20,353.09 610.00,353.16 610.80,353.08 611.60,353.06 612.40,353.50 613.20,353.13 614.00,353.36 614.80,353.30 615.60,353.14 616.40,353.47 617.20,353.11 618.00,353.42 618.80,353.11 619.60,353.29 620.40,353.17 621.20,353.20 622.00,353.63 622.80,353.53 623.60,353.23 624.40,353.58 625.20,353.18 626.00,353.29 626.80,353.57 627.60,353.44 628.40,353.12 629.20,353.65 630.00,353.19 630.80,353.22 631.60,353.53 632.40,353.26 633.20,353.25 634.00,353.11 634.80,353.13 635.60,353.42 636.40,353.22 637.20,353.44 638.00,353.30 638.80,353.35 639.60,353.66 640.40,353.37 641.20,353.43 642.00,353.61 642.80,353.20 643.60,353.18 644.40,353.64 645.20,353.59 646.00,353.25 646.80,353.21 647.60,353.54 648.41,353.65 649.21,353.19 650.02,353.63 650.82,353.58 651.63,353.40 652.44,353.28 653.24,353.08 654.05,353.02 654.86,353.57 655.66,353.12 656.47,353.39 657.27,353.11 658.08,353.43 658.89,353.29 659.69,353.09 660.50,353.01 661.30,353.32 662.11,352.92 662.92,353.00 663.72,353.19 664.53,353.35 665.34,353.20 666.14,352.99 666.95,353.36 667.75,352.91 668.56,352.79 669.37,352.93 670.17,353.02 670.98,352.78 671.78,352.84 672.59,352.94 673.40,353.05 674.20,352.77 675.01,352.90 675.82,353.20 676.62,353.25 677.43,353.04 678.23,353.05 679.04,352.97 679.85,352.69 680.65,352.62 681.46,352.59 682.26,353.12 683.07,352.98 683.88,353.12 684.68,352.55 685.49,352.90 686.30,352.80 687.10,352.94 687.91,352.68 688.71,353.07 689.52,352.51 690.33,352.78 691.13,352.88 691.94,352.96 692.74,352.85 693.55,352.82 694.36,352.86 695.16,352.92 695.97,352.57 696.78,352.76 697.58,352.88 698.39,352.85 699.19,352.56 700.00,352.77 700.80,352.81 701.60,352.63 702.40,352.65 703.20,352.50 704.00,352.61 704.80,352.62 705.60,352.30 706.40,352.63 707.20,352.83 708.00,352.76 708.80,352.66 709.60,352.45 710.40,352.65 711.20,352.55 712.00,352.46 712.80,352.69 713.60,352.23 714.40,352.62 715.20,352.18 716.00,352.52 716.80,352.44 717.60,352.28 718.40,352.56 719.20,352.43 720.00,352.49 720.80,352.67 721.60,352.26 722.40,352.11 723.20,352.28 724.00,352.50 724.80,352.20 725.60,352.18 726.40,352.61 727.20,352.46 728.00,352.32 728.80,352.58 729.60,352.24 730.40,352.43 731.20,352.15 732.00,352.28 732.80,352.50 733.60,352.55 734.40,352.53 735.20,352.22 736.00,352.33 736.80,352.17 737.60,352.05 738.40,352.26 739.20,352.46 740.00,352.46 740.80,352.37 741.60,352.51 742.40,352.10 743.20,352.02 744.00,352.19 744.80,352.07 745.60,352.03 746.40,352.14 747.20,352.26 748.00,352.18 748.80,352.06 749.60,352.37 750.40,352.45 751.20,352.12 752.00,351.89 752.80,351.86 753.60,352.35 754.40,351.85 755.20,352.24 756.00,352.15 756.80,351.99 757.60,352.27 758.40,351.80 759.20,351.86 760.00,352.05 760.80,351.78 761.60,352.26 762.40,351.90 763.20,351.83 764.00,351.77 764.80,352.11 765.60,351.99 766.40,352.10 767.20,352.11 768.00,352.19 768.80,352.27 769.60,352.10 770.40,351.80 771.20,351.96 772.00,351.78 772.80,351.67 773.60,351.94 774.40,352.08 775.20,351.75 776.00,351.80 776.80,351.84 777.60,352.04 778.40,351.93 779.20,351.98 780.00,352.05 780.81,351.83 781.62,352.06 782.43,352.12 783.23,351.63 784.04,352.13 784.85,352.00 785.66,351.63 786.47,351.82 787.28,351.92 788.08,352.08 788.89,351.76 789.70,351.87 790.51,352.05 791.32,351.99 792.13,352.07 792.93,351.78 793.74,351.88 794.55,351.61 795.36,351.91 796.17,351.96 796.98,351.85 797.79,351.89 798.59,351.58 799.40,351.99 800.21,352.03 801.02,352.02 801.83,351.75 802.64,351.90 803.44,351.61 804.25,351.96 805.06,351.92 805.87,351.61 806.68,351.44 807.49,351.65 808.29,351.71 809.10,351.83 809.91,351.66 810.72,351.38 811.53,351.84 812.34,351.39 813.15,351.82 813.95,351.44 814.76,351.53 815.57,351.79 816.38,351.40 817.19,351.40 818.00,351.61 818.80,351.73 819.61,351.79 820.42,351.70 821.23,351.85 822.04,351.57 822.85,351.83 823.65,351.31 824.46,351.39 825.27,351.56 826.08,351.41 826.89,351.67 827.70,351.61 828.51,351.53 829.31,351.72 830.12,351.54 830.93,351.39 831.74,351.42 832.55,351.70 833.36,351.72 834.16,351.30 834.97,351.68 835.78,351.75 836.59,351.47 837.40,351.50 838.21,351.27 839.01,351.46 839.82,351.43 840.63,351.49 841.44,351.14 842.25,351.70 843.06,351.42 843.87,351.34 844.67,351.58 845.48,351.43 846.29,351.38 847.10,351.49 847.91,351.11 848.72,351.39 849.52,351.31 850.33,351.62 851.14,351.60 851.95,351.20 852.76,351.32 853.57,351.10 854.37,351.28 855.18,351.50 855.99,351.55 856.80,351.29 857.63,351.37 858.47,351.48 859.30,351.92 860.13,352.29 860.97,351.99 861.80,352.57 862.60,352.11 863.41,352.22 864.21,352.24 865.01,352.51 865.81,352.29 866.62,352.31 867.42,352.47 868.22,352.16 869.03,352.54 869.83,352.17 870.63,352.41 871.44,352.25 872.24,352.22 873.04,352.42 873.84,352.36 874.65,352.33 875.45,352.35 876.25,352.42 877.06,352.20 877.86,352.22 878.66,352.48 879.46,352.48 880.27,352.42 881.07,352.61 881.87,352.47 882.68,352.61 883.48,352.24 884.28,352.54 885.09,352.59 885.89,352.64 886.69,352.29 887.49,352.29 888.30,352.65 889.10,352.23 889.90,352.70 890.71,352.63 891.51,352.18 892.31,352.24 893.11,352.54 893.92,352.26 894.72,352.16 895.52,352.60 896.33,352.35 897.13,352.57 897.93,352.18 898.74,352.34 899.54,352.51 900.34,352.11 901.14,352.22 901.95,352.51 902.75,352.65 903.55,352.68 904.36,352.17 905.16,352.40 905.96,352.55 906.76,352.40 907.57,352.51 908.37,352.21 909.17,352.14 909.98,352.16 910.78,352.12 911.58,352.43 912.39,352.41 913.19,352.44 913.99,352.19 914.79,352.21 915.60,352.22 916.40,352.60 917.20,352.69 918.01,352.66 918.81,352.16 919.61,352.14 920.41,352.67 921.22,352.38 922.02,352.56 922.82,352.30 923.63,352.38 924.43,352.41 925.23,352.36 926.04,352.46 926.84,352.11 927.64,352.52 928.44,352.61 929.25,352.21 930.05,352.37 930.85,352.54 931.66,352.34 932.46,352.22 933.26,352.20 934.06,352.41 934.87,352.11 935.67,352.64 936.47,352.58 937.28,352.52 938.08,352.62 938.88,352.48 939.69,352.34 940.49,352.46 941.29,352.40 942.09,352.69 942.90,352.58 943.70,352.25 944.53,352.25 945.37,351.75 946.20,351.37 947.01,351.39 947.81,351.14 948.62,351.43 949.42,351.42 950.23,351.31 951.03,351.35 951.84,351.35 952.64,351.13 953.45,351.32 954.25,350.92 955.06,351.09 955.87,351.16 956.67,350.88 957.48,351.09 958.28,351.26 959.09,351.25 959.89,351.01 960.70,351.43 961.50,351.27 962.31,351.07 963.11,351.26 963.92,351.20 964.73,351.18 965.53,351.09 966.34,351.45 967.14,351.24 967.95,351.27 968.75,351.31 969.56,351.44 970.36,350.86 971.17,351.21 971.97,351.29 972.78,350.99 973.59,351.08 974.39,350.87 975.20,350.95 976.00,351.06 976.81,350.89 977.61,350.98 978.42,351.37 979.22,351.16 980.03,351.13 980.83,351.40 981.64,351.16 982.45,351.42 983.25,351.20 984.06,351.30 984.86,350.86 985.67,351.17 986.47,351.26 987.28,350.83 988.08,351.36 988.89,350.90 989.69,351.08 990.50,351.10" fill="none" stroke="#6cb463" stroke-width="1" stroke-linejoin="round"/></svg>
<div class="a" style="left:548px;top:387.5px;width:10px;height:3px;border-radius:1px;background:#73bf69"></div>
<div class="t" style="left:563.2px;top:384.13px;font-size:8px;line-height:10px;color:#c2c3cc;font-weight:normal;letter-spacing:0px;">cool_cyl_temp GOOD</div>
<div class="a" style="left:43px;top:299px;width:115.3px;height:101.2px;border-radius:2px;background:linear-gradient(125deg,#479c42,#6db85e)"></div>
<div class="t" style="left:-199.6px;width:600px;text-align:center;top:340.66px;font-size:15.4px;line-height:19px;color:#ffffff;font-weight:normal;letter-spacing:0px;-webkit-text-stroke:0.35px #fff;transform:scaleX(1.01);transform-origin:50% 0;">Flame burning</div>
<svg style="left:0;top:0" width="1024" height="664"><path d="M193.75 388.53 A52.2 52.2 0 1 1 293.78 386.08" stroke="#37872d" stroke-width="15.8" fill="none"/><path d="M293.78 386.08 A52.2 52.2 0 0 1 293.05 388.53" stroke="#24252b" stroke-width="15.8" fill="none"/><path d="M183.58 391.84 A62.9 62.9 0 1 1 306.18 368.45" stroke="#c4162a" stroke-width="2.7" fill="none"/><path d="M306.18 368.45 A62.9 62.9 0 0 1 303.22 391.84" stroke="#37872d" stroke-width="2.7" fill="none"/></svg>
<div class="t" style="left:-57.19999999999999px;width:600px;text-align:center;top:363.86px;font-size:23.2px;line-height:28px;color:#37872d;font-weight:normal;letter-spacing:0px;-webkit-text-stroke:0.6px #37872d;">0.987</div>
<svg style="left:0;top:0" width="1024" height="664"><path d="M376.75 388.33 A52.2 52.2 0 0 1 456.66 329.66" stroke="#73bf69" stroke-width="15.8" fill="none"/><path d="M456.66 329.66 A52.2 52.2 0 0 1 476.05 388.33" stroke="#24252b" stroke-width="15.8" fill="none"/><path d="M366.58 391.64 A62.9 62.9 0 0 1 389.36 321.36" stroke="#f2495c" stroke-width="2.7" fill="none"/><path d="M389.36 321.36 A62.9 62.9 0 0 1 486.20 352.69" stroke="#73bf69" stroke-width="2.7" fill="none"/><path d="M486.20 352.69 A62.9 62.9 0 0 1 486.22 391.64" stroke="#f2495c" stroke-width="2.7" fill="none"/></svg>
<div class="t" style="left:126.5px;width:600px;text-align:center;top:362.94px;font-size:25px;line-height:30px;color:#73bf69;font-weight:normal;letter-spacing:0px;-webkit-text-stroke:0.7px #73bf69;">1985</div>
<div class="a" style="left:90px;top:446.5px;width:78.30px;height:49px;background:#b13b4a"></div>
<div class="a" style="left:168.3px;top:446.5px;width:1.00px;height:49px;background:#a65a5a"></div>
<div class="a" style="left:169.3px;top:446.5px;width:5.00px;height:49px;background:#b13b4a"></div>
<div class="a" style="left:174.3px;top:446.5px;width:201.60px;height:49px;background:#588e53"></div>
<div class="a" style="left:375.9px;top:446.5px;width:75.70px;height:49px;background:#b13b4a"></div>
<div class="a" style="left:451.6px;top:446.5px;width:50.40px;height:49px;background:#588e53"></div>
<div class="a" style="left:186.2px;top:447px;width:1px;height:48px;background:rgba(255,255,255,0.02)"></div>
<div class="a" style="left:290px;top:447px;width:1px;height:48px;background:rgba(255,255,255,0.02)"></div>
<div class="a" style="left:394.4px;top:447px;width:1px;height:48px;background:rgba(255,255,255,0.02)"></div>
<div class="a" style="left:498.3px;top:447px;width:1px;height:48px;background:rgba(255,255,255,0.02)"></div>
<div class="t" style="left:91.5px;top:466.96px;font-size:8.2px;line-height:10px;color:#ffffff;font-weight:bold;letter-spacing:0px;">false</div>
<div class="t" style="left:175.8px;top:466.96px;font-size:8.2px;line-height:10px;color:#ffffff;font-weight:bold;letter-spacing:0px;">true</div>
<div class="t" style="left:377.3px;top:466.96px;font-size:8.2px;line-height:10px;color:#ffffff;font-weight:bold;letter-spacing:0px;">false</div>
<div class="t" style="left:452.8px;top:466.96px;font-size:8.2px;line-height:10px;color:#ffffff;font-weight:bold;letter-spacing:0px;">true</div>
<div class="t" style="left:51px;top:461.05px;font-size:8.5px;line-height:11px;color:#c2c3cc;font-weight:normal;letter-spacing:0px;">burning</div>
<div class="t" style="left:-113.80000000000001px;width:600px;text-align:center;top:501.16px;font-size:8.2px;line-height:10px;color:#c2c3cc;font-weight:normal;letter-spacing:0px;">13:45</div>
<div class="t" style="left:-10px;width:600px;text-align:center;top:501.16px;font-size:8.2px;line-height:10px;color:#c2c3cc;font-weight:normal;letter-spacing:0px;">13:50</div>
<div class="t" style="left:94.19999999999999px;width:600px;text-align:center;top:501.16px;font-size:8.2px;line-height:10px;color:#c2c3cc;font-weight:normal;letter-spacing:0px;">13:55</div>
<div class="t" style="left:198px;width:600px;text-align:center;top:501.16px;font-size:8.2px;line-height:10px;color:#c2c3cc;font-weight:normal;letter-spacing:0px;">14:00</div>
<div class="a" style="left:59.2px;top:517.5px;width:10px;height:3px;border-radius:1px;background:#f2495c"></div>
<div class="t" style="left:74px;top:512.78px;font-size:9px;line-height:11px;color:#c2c3cc;font-weight:normal;letter-spacing:0px;">&lt;</div>
<div class="t" style="left:81.5px;top:514.07px;font-size:7px;line-height:9px;color:#c2c3cc;font-weight:normal;letter-spacing:0px;">-∞</div>
<div class="a" style="left:95.6px;top:517.5px;width:10px;height:3px;border-radius:1px;background:#73bf69"></div>
<div class="t" style="left:110.6px;top:512.31px;font-size:9.2px;line-height:12px;color:#c2c3cc;font-weight:normal;letter-spacing:0px;transform:scaleX(0.95);transform-origin:0 0;">1+</div>
<div class="t" style="left:537px;top:437.27px;font-size:12.5px;line-height:15px;color:#d8d9e2;font-weight:normal;letter-spacing:0px;transform:scaleX(0.965);transform-origin:0 0;">cool_cyl_temp GOOD</div>
<div class="t" style="left:537px;top:486.27px;font-size:12.5px;line-height:15px;color:#d8d9e2;font-weight:normal;letter-spacing:0px;transform:scaleX(0.965);transform-origin:0 0;">warm_cyl_temp GOOD</div>
<div class="a" style="left:537px;top:453.3px;width:374.3px;height:22.6px;border-radius:2px;background:#25272c"></div>
<div class="a" style="left:537px;top:453.3px;width:44.2px;height:22.6px;border-radius:2px;background:linear-gradient(90deg,#1f60c4 0px,#fff899 187px,#c4162a 374px);background-size:374px 100%"></div>
<div class="a" style="left:537px;top:502.3px;width:374.3px;height:22.6px;border-radius:2px;background:#25272c"></div>
<div class="a" style="left:537px;top:502.3px;width:335.3px;height:22.6px;border-radius:2px;background:linear-gradient(90deg,#1f60c4 0px,#fff899 187px,#c4162a 374px);background-size:374px 100%"></div>
<div class="t" style="left:398.6px;width:600px;text-align:right;top:451.27px;font-size:22.3px;line-height:27px;color:#5889cc;font-weight:normal;letter-spacing:0px;">35.1</div>
<div class="t" style="left:399.79999999999995px;width:600px;text-align:right;top:500.07px;font-size:22.3px;line-height:27px;color:#d44a3f;font-weight:normal;letter-spacing:0px;">267</div>
</body></html>
